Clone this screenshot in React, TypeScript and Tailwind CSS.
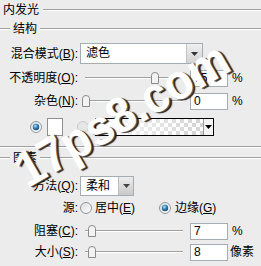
import React from "react";

/* etched separator: dark line on top, white line below */
const ETCH = "h-0 border-t border-b border-t-[#a0a0a0] border-b-white";

function Radio({ checked, dim }: { checked?: boolean; dim?: boolean }) {
  return (
    <svg width="12" height="12" viewBox="0 0 12 12" className="shrink-0">
      <defs>
        <radialGradient id="rb" cx="40%" cy="35%" r="65%">
          <stop offset="0" stopColor="#bfe3f7" />
          <stop offset="0.45" stopColor="#3d8fc4" />
          <stop offset="1" stopColor="#134a73" />
        </radialGradient>
        <linearGradient id="rf" x1="0" y1="0" x2="1" y2="1">
          <stop offset="0" stopColor="#dcdcdc" />
          <stop offset="1" stopColor="#ffffff" />
        </linearGradient>
      </defs>
      <circle cx="6" cy="6" r="5.5" fill={dim ? "#e6e6e6" : "url(#rf)"} stroke={dim ? "#c8c8c8" : "#8e99a3"} />
      {checked && <circle cx="6" cy="6" r="3.2" fill="url(#rb)" />}
    </svg>
  );
}

function Thumb() {
  return (
    <svg width="8" height="12" viewBox="0 0 8 12">
      <path d="M0.5 11.5 V3.5 Q0.5 0.5 4 0.5 Q7.5 0.5 7.5 3.5 V11.5 Z" fill="#f3f3f3" stroke="#8a8a8a" />
    </svg>
  );
}

function Slider({ thumbClass }: { thumbClass: string }) {
  return (
    <div className="relative ml-[2px] h-[18px] w-[106px] shrink-0">
      <div className={`absolute left-[5px] right-[3px] top-[8px] ${ETCH}`} />
      <div className={`absolute top-[3px] flex ${thumbClass}`}>
        <Thumb />
      </div>
    </div>
  );
}

function NumBox({ v }: { v: string }) {
  return (
    <div className="ml-[4px] h-[17px] w-[38px] shrink-0 border border-[#a5acb2] bg-white pl-[3px] text-[12px] leading-[15px]">
      {v}
    </div>
  );
}

function Arrow({ color = "#333" }: { color?: string }) {
  return (
    <svg width="7" height="4" viewBox="0 0 7 4">
      <path d="M0 0 H7 L3.5 4 Z" fill={color} />
    </svg>
  );
}

function Label({ children }: { children: React.ReactNode }) {
  return <span className="flex w-[78px] shrink-0 justify-end whitespace-nowrap">{children}</span>;
}

export default function App() {
  return (
    <div className="relative h-[266px] w-[261px] overflow-hidden bg-[#ececec] font-['Liberation_Sans','Noto_Sans_CJK_SC',sans-serif] text-[12px] leading-none text-black">
      {/* title */}
      <div className="flex h-[19px] items-center pl-[3px]">
        <span className="whitespace-nowrap">内发光</span>
        <div className={`ml-[4px] flex-1 ${ETCH}`} />
      </div>

      {/* 结构 group */}
      <div className="flex h-[19px] items-center">
        <div className={`w-[10px] ${ETCH}`} />
        <span className="mx-[3px] whitespace-nowrap">结构</span>
        <div className={`flex-1 ${ETCH}`} />
      </div>

      <div className="mt-[5px] flex h-[21px] items-center">
        <Label>混合模式(<u>B</u>):</Label>
        <div className="ml-[2px] flex h-[21px] w-[123px] border border-[#a5acb2] bg-white">
          <span className="flex-1 pl-[5px] leading-[19px]">滤色</span>
          <div className="flex w-[16px] items-center justify-center border-l border-[#c4c4c4] bg-[linear-gradient(#f0f0f0,#d2d2d2)]">
            <Arrow />
          </div>
        </div>
      </div>

      <div className="mt-[5px] flex h-[18px] items-center">
        <Label>不透明度(<u>O</u>):</Label>
        <Slider thumbClass="left-[71px]" />
        <NumBox v="75" />
        <span className="ml-[4px]">%</span>
      </div>

      <div className="mt-[5px] flex h-[18px] items-center">
        <Label>杂色(<u>N</u>):</Label>
        <Slider thumbClass="left-[2px]" />
        <NumBox v="0" />
        <span className="ml-[4px]">%</span>
      </div>

      <div className="mt-[8px] flex h-[18px] items-center pl-[30px]">
        <Radio checked />
        <div className="ml-[5px] h-[18px] w-[16px] border border-[#8f8f8f] bg-white" />
        <div className="ml-[14px] flex">
          <Radio dim />
        </div>
        <div className="ml-[6px] flex h-[18px] w-[119px] border border-black">
          <div className="flex-1 bg-[linear-gradient(to_right,#ffffff,rgba(255,255,255,0)),repeating-conic-gradient(#d2d2d2_0_25%,#ffffff_0_50%)] bg-[length:100%_100%,8px_8px]" />
          <div className="flex w-[10px] items-center justify-center border-l border-[#9a9a9a] bg-[#f4f4f4]">
            <Arrow color="#000" />
          </div>
        </div>
      </div>

      <div className={`mt-[10px] ${ETCH}`} />

      {/* 图素 group */}
      <div className="mt-[1px] flex h-[18px] items-center">
        <div className={`w-[10px] ${ETCH}`} />
        <span className="mx-[3px] whitespace-nowrap">图素</span>
        <div className={`flex-1 ${ETCH}`} />
      </div>

      <div className="mt-[9px] flex h-[20px] items-center">
        <Label>方法(<u>Q</u>):</Label>
        <div className="ml-[2px] flex h-[20px] w-[54px] border border-[#a5acb2] bg-white">
          <span className="flex-1 pl-[5px] leading-[18px]">柔和</span>
          <div className="flex w-[15px] items-center justify-center border-l border-[#bdbdbd] bg-[linear-gradient(#ececec,#c9c9c9)]">
            <Arrow color="#444" />
          </div>
        </div>
      </div>

      <div className="mt-[4px] flex h-[16px] items-center">
        <Label>源:</Label>
        <div className="ml-[2px] flex">
          <Radio />
        </div>
        <span className="ml-[3px] whitespace-nowrap">居中(<u>E</u>)</span>
        <div className="ml-[24px] flex">
          <Radio checked />
        </div>
        <span className="ml-[4px] whitespace-nowrap">边缘(<u>G</u>)</span>
      </div>

      <div className="mt-[6px] flex h-[18px] items-center">
        <Label>阻塞(<u>C</u>):</Label>
        <Slider thumbClass="left-[8px]" />
        <NumBox v="7" />
        <span className="ml-[4px]">%</span>
      </div>

      <div className="mt-[3px] flex h-[18px] items-center">
        <Label>大小(<u>S</u>):</Label>
        <Slider thumbClass="left-[8px]" />
        <NumBox v="8" />
        <span className="ml-[2px] whitespace-nowrap">像素</span>
      </div>

      {/* watermark */}
      <div className="pointer-events-none absolute inset-0 flex items-center justify-center">
        <span className="-translate-x-[9px] -translate-y-[19px] -rotate-[30deg] scale-y-[1.08] whitespace-nowrap font-['Liberation_Sans',sans-serif] text-[46px] leading-none font-bold text-white [text-shadow:1px_1px_0_#555,2px_2px_1px_#111]">
          17ps8.com
        </span>
      </div>
    </div>
  );
}
